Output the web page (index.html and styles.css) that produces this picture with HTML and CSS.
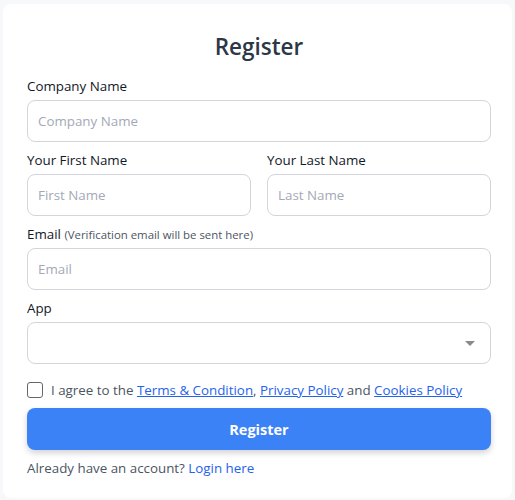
FILE: index.html
```html
<!DOCTYPE html>
<html lang="en">
<head>
<meta charset="utf-8">
<title>Register</title>
<link rel="stylesheet" href="styles.css">
</head>
<body>
<div class="card">
  <h1 class="title">Register</h1>
  <form class="form">
    <div class="group">
      <label class="label">Company Name</label>
      <input class="input" type="text" placeholder="Company Name">
    </div>
    <div class="row">
      <div class="group">
        <label class="label">Your First Name</label>
        <input class="input" type="text" placeholder="First Name">
      </div>
      <div class="group">
        <label class="label">Your Last Name</label>
        <input class="input" type="text" placeholder="Last Name">
      </div>
    </div>
    <div class="group">
      <label class="label">Email <span class="hint">(Verification email will be sent here)</span></label>
      <input class="input" type="email" placeholder="Email">
    </div>
    <div class="group">
      <label class="label">App</label>
      <div class="select">
        <span class="arrow"></span>
      </div>
    </div>
    <div class="agree">
      <span class="checkbox"></span>
      <span class="agree-text">I agree to the <a href="#">Terms &amp; Condition</a>, <a href="#">Privacy Policy</a> and <a href="#">Cookies Policy</a></span>
    </div>
    <button class="btn" type="button">Register</button>
    <p class="login">Already have an account? <a href="#">Login here</a></p>
  </form>
</div>
</body>
</html>
```
FILE: styles.css
```css
* { box-sizing: border-box; }
html, body { margin: 0; padding: 0; }
body {
  background: #f7f8fa;
  font-family: "Open Sans", "Noto Sans", sans-serif;
  font-size: 13.35px;
  color: #1f2937;
  padding: 4px 3px 3px 3px;
}
.card {
  background: #fff;
  border-radius: 8px;
  padding: 28px 21px 20px 24px;
  min-height: 493px;
}
.title {
  margin: 0 0 14px 0;
  text-align: center;
  font-size: 22.5px;
  font-weight: 600;
  color: #2d3748;
  line-height: 30px;
}
.form { display: flex; flex-direction: column; }
.group { display: flex; flex-direction: column; margin-bottom: 8px; }
.row { display: grid; grid-template-columns: 1fr 1fr; gap: 16px; }
.label { line-height: 20px; height: 20px; margin-bottom: 4px; color: #111827; }
.hint { font-size: 11.4px; color: #4b5563; }
.input, .select {
  height: 42px;
  border: 1px solid #d4d4dc;
  border-radius: 8px;
  padding: 0 10px;
  font-family: inherit;
  font-size: 13.35px;
  color: #1f2937;
  background: #fff;
  outline: none;
}
.input::placeholder { color: #a3a9b6; }
.select { display: flex; align-items: center; justify-content: flex-end; padding-right: 15px; }
.arrow {
  width: 0; height: 0;
  border-left: 5px solid transparent;
  border-right: 5px solid transparent;
  border-top: 5px solid #8a8a8a;
}
.agree { display: flex; align-items: center; gap: 8px; margin-top: 10px; height: 16px; }
.checkbox {
  width: 16px; height: 16px;
  border: 1px solid #666;
  border-radius: 3px;
  flex: none;
}
.agree-text { color: #4b5563; }
.agree-text a { color: #2563eb; text-decoration: underline; }
.btn {
  margin-top: 10px;
  height: 42px;
  border: none;
  border-radius: 8px;
  background: #3b82f6;
  color: #fff;
  font-family: inherit;
  font-size: 14.5px;
  font-weight: 700;
  box-shadow: 0 3px 6px rgba(0,0,0,0.18);
}
.login { margin: 8px 0 0 0; color: #4b5563; line-height: 20px; }
.login a { color: #2563eb; text-decoration: none; }
```
